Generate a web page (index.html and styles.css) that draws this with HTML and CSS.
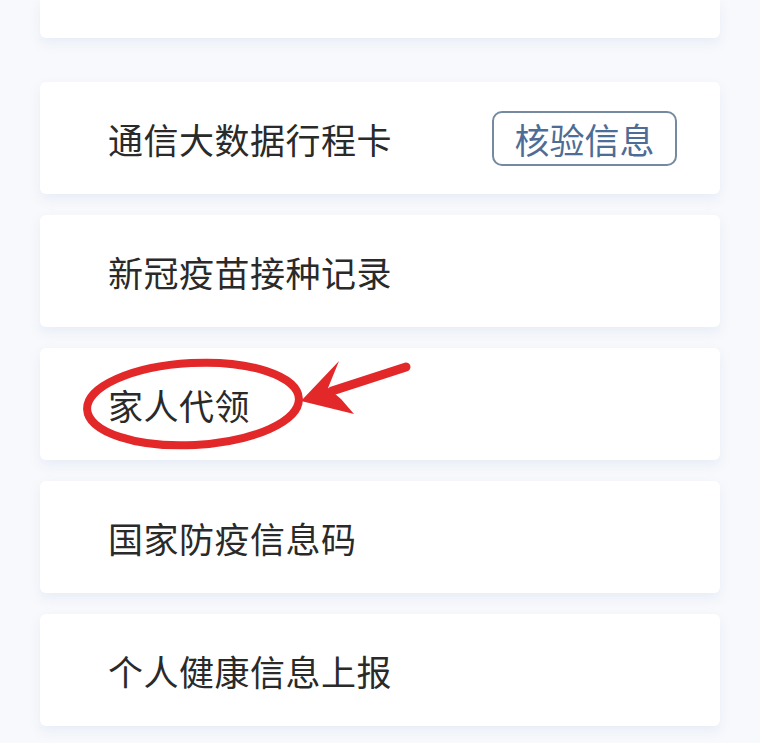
FILE: index.html
```html
<!DOCTYPE html>
<html lang="zh-CN">
<head>
    <meta charset="UTF-8">
    <meta name="viewport" content="width=device-width, initial-scale=1.0">
    <title>服务列表</title>
    <link rel="stylesheet" href="styles.css">
</head>
<body>
    <div class="page">
        <div class="list">
            <div class="card card-cut"></div>
            <div class="card">
                <span class="label">通信大数据行程卡</span>
                <button class="verify">核验信息</button>
            </div>
            <div class="card">
                <span class="label">新冠疫苗接种记录</span>
            </div>
            <div class="card">
                <span class="label">家人代领</span>
            </div>
            <div class="card">
                <span class="label">国家防疫信息码</span>
            </div>
            <div class="card">
                <span class="label">个人健康信息上报</span>
            </div>
        </div>

        <!-- red marker drawn over the list -->
        <svg class="marker" viewBox="0 0 760 743" width="760" height="743">
            <ellipse cx="193" cy="404" rx="106" ry="41" fill="none" stroke="#e3282a" stroke-width="8" transform="rotate(-3 193 404)"/>
            <line x1="332" y1="391" x2="406" y2="367" stroke="#e3282a" stroke-width="9" stroke-linecap="round"/>
            <polygon points="301,401 339,361 328,388 341,399 354,414" fill="#e3282a"/>
        </svg>
    </div>
</body>
</html>
```

FILE: styles.css
```css
body {
    margin: 0;
    background: #f8f9fc;
    font-family: "Noto Sans CJK SC", "Noto Sans", sans-serif;
    color: #2a2a2a;
}
.page {
    position: relative;
    width: 760px;
    height: 743px;
    overflow: hidden;
}
.list {
    display: flex;
    flex-direction: column;
    gap: 21px;
    padding: 0 40px;
}
.card {
    height: 112px;
    flex-shrink: 0;
    background: #fff;
    border-radius: 6px;
    box-shadow: 0 5px 12px rgba(220, 228, 244, 0.6);
    display: flex;
    align-items: center;
    justify-content: space-between;
    padding: 0 43px 0 68px;
}
.card-cut {
    height: 38px;
    margin-bottom: 23px;
    border-radius: 0 0 6px 6px;
}
.label {
    font-size: 35px;
    letter-spacing: 0.5px;
}
.verify {
    width: 185px;
    height: 55px;
    box-sizing: border-box;
    border: 2px solid #7589a0;
    border-radius: 10px;
    background: #fff;
    color: #4e6d96;
    font-family: inherit;
    font-size: 35px;
    padding: 0;
    line-height: 1;
}
.marker {
    position: absolute;
    left: 0;
    top: 0;
}
```
